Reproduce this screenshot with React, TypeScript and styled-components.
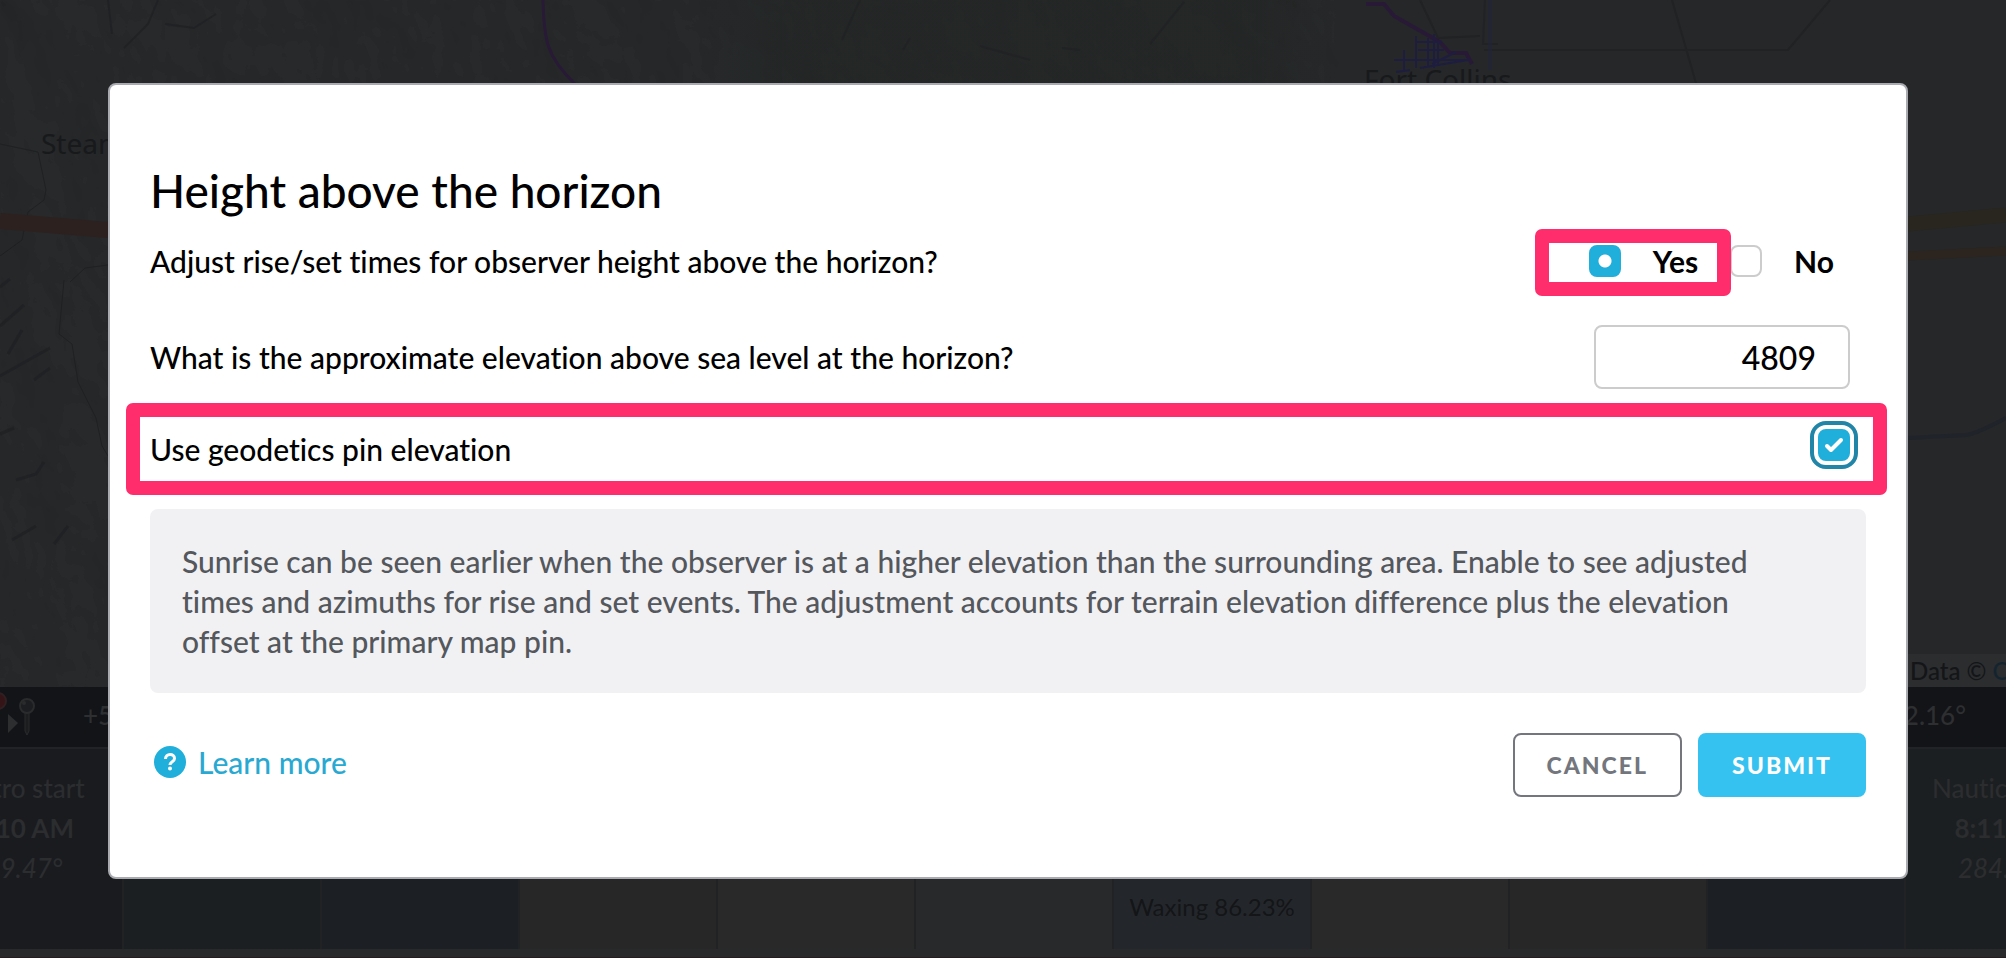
import React, { useState } from "react";
import styled, { createGlobalStyle, css } from "styled-components";

const GlobalStyle = createGlobalStyle`
  * { box-sizing: border-box; }
  html, body, #root { height: 100%; }
  body {
    margin: 0;
    overflow: hidden;
    background: #242628;
    color: #000;
    font-family: Lato, "Liberation Sans", sans-serif;
    font-size: 30px;
    font-weight: 500;
    font-variant-ligatures: none;
    line-height: 40px;
  }
`;

const Page = styled.main`
  position: relative;
  display: flex;
  flex-direction: column;
  min-height: 100vh;
`;

const MapPane = styled.section`
  position: relative;
  flex: 1;
  overflow: hidden;
  background: #252729;
`;

const MapArt = styled.svg`
  position: absolute;
  inset: 0;
  width: 100%;
  height: 100%;
  font-family: "Noto Sans", sans-serif;
  font-size: 28px;
  font-weight: 400;
`;

const Attribution = styled.p`
  position: absolute;
  right: 0;
  bottom: 0;
  width: 110px;
  margin: 0;
  padding-left: 14px;
  overflow: hidden;
  white-space: nowrap;
  background: #2b2d2f;
  color: #131517;
  font-size: 24px;
  line-height: 33px;

  a {
    color: #14242f;
    text-decoration: none;
  }
`;

const PinBar = styled.div`
  display: flex;
  justify-content: space-between;
  align-items: center;
  height: 62px;
  padding: 0 40px 4px 0;
  border-bottom: 2px solid #212326;
  background: #131418;
  color: #2d2f31;
  font-size: 26px;
`;

const PinGroup = styled.div`
  display: flex;
  align-items: center;
  gap: 43px;
`;

const Timeline = styled.div`
  display: flex;
  height: 200px;
  margin-left: -74px;
  overflow: hidden;
`;

const Cell = styled.div<{ $tone: string }>`
  display: flex;
  flex: 0 0 198px;
  flex-direction: column;
  align-items: center;
  padding-top: 19px;
  border-right: 2px solid #202224;
  background: ${(p) => p.$tone};
  color: #2b2d2f;
  font-size: 26px;
  white-space: nowrap;
`;

const Phase = styled.span`
  margin-top: auto;
  padding-bottom: 22px;
  color: #131517;
  font-size: 24px;
  font-weight: 400;
`;

const BottomStrip = styled.div`
  height: 9px;
  border-bottom: 1px solid #261c20;
  background: #28292b;
`;

const Overlay = styled.div`
  position: fixed;
  inset: 0;
  padding: 83px 98px 79px 108px;
`;

const Dialog = styled.form`
  padding: 80px 40px;
  border: 2px solid #a9abb0;
  border-radius: 8px;
  background: #fff;
`;

const Title = styled.h1`
  margin: 0 0 12px;
  font-size: 46px;
  font-weight: 500;
  line-height: 52px;
`;

const Row = styled.div<{ $gap: number }>`
  position: relative;
  display: flex;
  justify-content: space-between;
  align-items: center;
  min-height: 64px;
  margin-bottom: ${(p) => p.$gap}px;
`;

const callout = css`
  content: "";
  position: absolute;
  border: 14px solid #ff2d6c;
  border-radius: 7px;
  pointer-events: none;
`;

const CalloutRow = styled(Row)`
  &::after {
    ${callout}
    inset: -14px -21px -14px -24px;
  }
`;

const Choices = styled.div`
  display: flex;
  gap: 32px;
  padding-right: 32px;
`;

const Choice = styled.label<{ $marked?: boolean }>`
  position: relative;
  display: flex;
  align-items: center;
  gap: 32px;
  height: 32px;
  font-weight: 700;

  ${(p) =>
    p.$marked &&
    css`
      z-index: 1;
      &::after {
        ${callout}
        inset: -16px -33px -19px -54px;
      }
    `}
`;

const box = css`
  appearance: none;
  flex: none;
  width: 32px;
  height: 32px;
  margin: 0;
  border: 2px solid #ccc;
  border-radius: 8px;
  background: #fff;
`;

const Radio = styled.input`
  ${box}
  &:checked {
    border-color: #20aedb;
    background: radial-gradient(circle, #fff 6px, #20aedb 7px);
  }
`;

const CheckWrap = styled.span`
  position: relative;
  align-self: flex-start;
  width: 32px;
  height: 32px;
  margin: 12px 16px 0 0;

  svg {
    position: absolute;
    inset: 0;
    pointer-events: none;
  }
`;

const Check = styled.input`
  ${box}
  display: block;
  outline: 4px solid #2185a8;
  outline-offset: 4px;
  &:checked {
    border-color: #20aedb;
    background: #20aedb;
  }
`;

const NumberField = styled.input`
  width: 256px;
  height: 64px;
  margin-right: 16px;
  padding: 0 32px;
  border: 2px solid #ccc;
  border-radius: 8px;
  background: #fff;
  color: #000;
  font: inherit;
  font-size: 32px;
  text-align: right;
`;

const Info = styled.p`
  margin: 0 0 40px;
  padding: 32px 72px 32px 32px;
  border-radius: 8px;
  background: #f1f1f4;
  color: #54575c;
`;

const Footer = styled.footer`
  display: flex;
  gap: 16px;
`;

const HelpLink = styled.a`
  display: flex;
  align-items: center;
  gap: 12px;
  height: 58px;
  margin-right: auto;
  padding-left: 4px;
  color: #29a9d2;
  text-decoration: none;
`;

const Button = styled.button<{ $primary?: boolean }>`
  min-width: 168px;
  height: 64px;
  padding: 0 32px;
  border: 2px solid ${(p) => (p.$primary ? "#35c2f1" : "#73767d")};
  border-radius: 8px;
  background: ${(p) => (p.$primary ? "#35c2f1" : "#fff")};
  color: ${(p) => (p.$primary ? "#fff" : "#73767d")};
  font: inherit;
  font-size: 23px;
  font-weight: 900;
  letter-spacing: 2px;
`;

const cells: { tone: string; content?: React.ReactNode }[] = [
  {
    tone: "#1a1b1f",
    content: (
      <>
        <span>Astro start</span>
        <b>5:10 AM</b>
        <i>59.47°</i>
      </>
    ),
  },
  { tone: "#1b1f21" },
  { tone: "#1c2024" },
  { tone: "#272727" },
  { tone: "#292929" },
  { tone: "#28292b" },
  { tone: "#23272b", content: <Phase>Waxing 86.23%</Phase> },
  { tone: "#292929" },
  { tone: "#272727" },
  { tone: "#1c1f24" },
  {
    tone: "#1b1f21",
    content: (
      <>
        <span>Nautical end</span>
        <b>8:11 PM</b>
        <i>284.15°</i>
      </>
    ),
  },
];

function MapDrawing() {
  return (
    <MapArt viewBox="0 0 2006 687" preserveAspectRatio="none" aria-hidden="true">
      <defs>
        <filter id="relief" x="0" y="0" width="100%" height="100%">
          <feTurbulence type="fractalNoise" baseFrequency="0.012 0.009" numOctaves="4" seed="7" />
          <feDiffuseLighting surfaceScale="9" lightingColor="#2d2d2f" diffuseConstant="1.1">
            <feDistantLight azimuth="315" elevation="55" />
          </feDiffuseLighting>
        </filter>
        <linearGradient id="forest">
          <stop offset="0" stopColor="#222624" stopOpacity="0" />
          <stop offset="0.15" stopColor="#222624" />
          <stop offset="0.85" stopColor="#222624" />
          <stop offset="1" stopColor="#222624" stopOpacity="0" />
        </linearGradient>
      </defs>
      <rect width="1340" height="687" filter="url(#relief)" opacity="0.3" />
      <rect x="700" width="640" height="90" fill="url(#forest)" opacity="0.6" />
      <g fill="none" stroke="#1f2123" strokeWidth="2">
        <path d="M108 0 L112 34 M158 0 L148 24 L124 48 M165 24 L194 28 L216 14" opacity="0.8" />
        <path d="M860 0 L842 40 M910 38 L903 50 M980 46 L1030 60 M1080 50 L1062 48 M1184 2 L1150 44 M1485 0 L1483 44 L1498 44" opacity="0.7" />
        <path d="M1672 0 L1696 83 M1420 0 L1438 38 L1480 36 M1484 50 L1788 50 L1830 0" stroke="#202224" />
      </g>
      <g fill="none" stroke="#1e2022">
        <path d="M0 144 L38 152 L46 190 L44 200 L28 212 L22 240 L0 256 M108 265 L85 268 L70 282 M64 280 L59 334 L72 344 L78 382 L96 418 L102 446 L108 456" />
        <path d="M0 287 L10 279 M0 326 L24 305 M8 354 L22 330 M0 376 L50 348 M34 380 L50 368 M0 434 L14 428 M16 480 L36 474 L44 462 M12 540 L36 526 M54 544 L68 526" strokeWidth="3" opacity="0.7" />
      </g>
      <path d="M1908 438 L1966 435 Q1976 434 2006 418" fill="none" stroke="#202329" strokeWidth="4" />
      <path d="M1490 0V70" stroke="#22243a" strokeWidth="4" opacity="0.6" />
      <path d="M0 221 L108 230" stroke="#2d211f" strokeWidth="16" />
      <path d="M1908 224 L2006 215" stroke="#28261f" strokeWidth="15" />
      <path d="M1908 256 L2006 251" stroke="#2c241f" strokeWidth="9" />
      <path d="M543 0 C544 40 546 56 575 84" fill="none" stroke="#281a36" strokeWidth="3" />
      <path d="M1366 4 H1384 L1394 16 L1440 42 L1450 53 H1466 L1472 64" fill="none" stroke="#281a36" strokeWidth="4" />
      <path d="M1416 36 V68 M1428 38 V66 M1434 34 V68 M1438 42 V66 M1415 42 H1442 M1418 50 H1444 M1394 60 H1470 M1404 50 V72 M1396 72 L1410 70 M1420 68 L1468 60 M1432 64 L1456 52" fill="none" stroke="#1e1d40" strokeWidth="2" />
      <text x="41" y="154" fill="#17191b">Steamboat</text>
      <text x="1364" y="90" fill="#17191b">Fort Collins</text>
    </MapArt>
  );
}

export default function App() {
  const [adjust, setAdjust] = useState("yes");
  const [elevation, setElevation] = useState("4809");
  const [usePin, setUsePin] = useState(true);

  return (
    <Page>
      <GlobalStyle />
      <MapPane>
        <MapDrawing />
        <Attribution>
          Data © <a href="#osm">OpenStreetMap</a>
        </Attribution>
      </MapPane>
      <PinBar>
        <PinGroup>
          <svg width="40" height="60" viewBox="0 0 40 60" aria-hidden="true">
            <circle cx="-2" cy="16" r="8" fill="#351418" stroke="#302022" strokeWidth="2" />
            <path d="M8 29 L18 38 L8 48 Z" fill="#2d2e30" />
            <path d="M25 28 V46 L27 50 L29 46 V28" fill="#1c1d1f" stroke="#292a2c" />
            <circle cx="27" cy="21" r="7" fill="#1c1d20" stroke="#2a2b2d" strokeWidth="2" />
            <circle cx="24" cy="18" r="2" fill="#2a2b2d" />
          </svg>
          <span>+5</span>
        </PinGroup>
        <span>-2.16°</span>
      </PinBar>
      <Timeline>
        {cells.map((cell, i) => (
          <Cell key={i} $tone={cell.tone}>
            {cell.content}
          </Cell>
        ))}
      </Timeline>
      <BottomStrip />

      <Overlay>
        <Dialog aria-labelledby="dialog-title" onSubmit={(e) => e.preventDefault()}>
          <Title id="dialog-title">Height above the horizon</Title>

          <Row $gap={32} role="radiogroup" aria-labelledby="adjust-label">
            <span id="adjust-label">Adjust rise/set times for observer height above the horizon?</span>
            <Choices>
              <Choice $marked>
                <Radio type="radio" name="adjust" checked={adjust === "yes"} onChange={() => setAdjust("yes")} />
                Yes
              </Choice>
              <Choice>
                <Radio type="radio" name="adjust" checked={adjust === "no"} onChange={() => setAdjust("no")} />
                No
              </Choice>
            </Choices>
          </Row>

          <Row $gap={28}>
            <label htmlFor="elevation">What is the approximate elevation above sea level at the horizon?</label>
            <NumberField
              id="elevation"
              inputMode="numeric"
              value={elevation}
              onChange={(e) => setElevation(e.target.value)}
            />
          </Row>

          <CalloutRow $gap={28}>
            <label htmlFor="use-pin">Use geodetics pin elevation</label>
            <CheckWrap>
              <Check id="use-pin" type="checkbox" checked={usePin} onChange={(e) => setUsePin(e.target.checked)} />
              {usePin && (
                <svg width="32" height="32" viewBox="0 0 32 32" aria-hidden="true">
                  <path
                    d="M9 17 L13 21 L23 11"
                    fill="none"
                    stroke="#fff"
                    strokeWidth="4"
                    strokeLinecap="round"
                    strokeLinejoin="round"
                  />
                </svg>
              )}
            </CheckWrap>
          </CalloutRow>

          <Info>
            Sunrise can be seen earlier when the observer is at a higher elevation than the surrounding area. Enable to
            see adjusted times and azimuths for rise and set events. The adjustment accounts for terrain elevation
            difference plus the elevation offset at the primary map pin.
          </Info>

          <Footer>
            <HelpLink href="#learn-more">
              <svg width="32" height="32" viewBox="0 0 32 32" aria-hidden="true">
                <circle cx="16" cy="16" r="16" fill="#20aedb" />
                <path
                  d="M11.5 13 C11.5 7 20.5 7 20.5 12.5 C20.5 16 16 15.500 16 19"
                  fill="none"
                  stroke="#fff"
                  strokeWidth="3"
                />
                <circle cx="16" cy="22.500" r="2" fill="#fff" />
              </svg>
              Learn more
            </HelpLink>
            <Button type="button">CANCEL</Button>
            <Button type="submit" $primary>
              SUBMIT
            </Button>
          </Footer>
        </Dialog>
      </Overlay>
    </Page>
  );
}
